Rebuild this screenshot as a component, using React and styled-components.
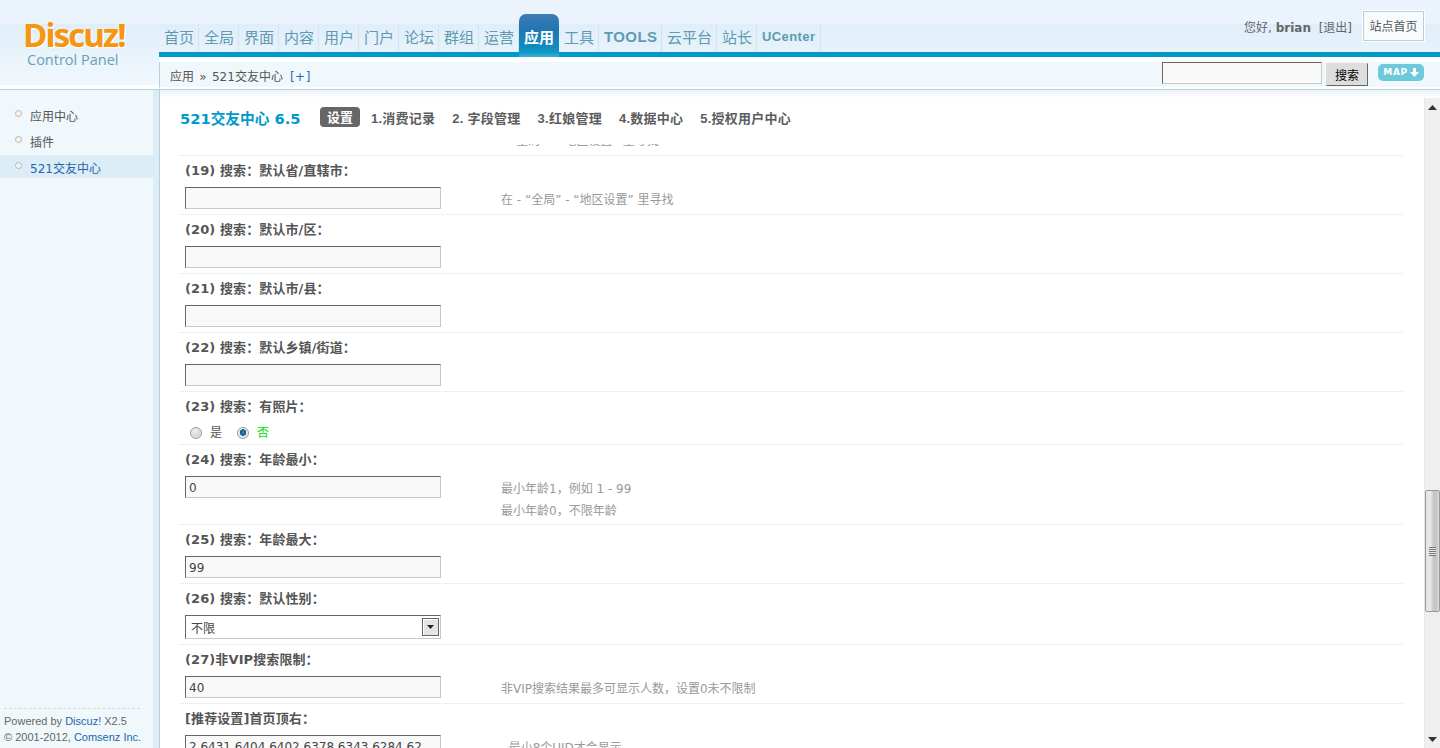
import React from "react";
import styled, { createGlobalStyle } from "styled-components";

const Global = createGlobalStyle`
  html, body { margin: 0; padding: 0; height: 100%; overflow: hidden; background: #fff; }
  body { font: 12px/18px "DejaVu Sans", "Noto Sans CJK SC", sans-serif; color: #555; }
  * { box-sizing: border-box; }
`;

const Page = styled.div`
  height: 748px;
  display: flex;
  flex-direction: column;
  overflow: hidden;
`;
const Header = styled.header`
  height: 90px;
  flex: none;
  display: flex;
  border-bottom: 1px solid #b9d0dc;
  background: linear-gradient(#ebf4fc 0, #ebf4fc 24px, #e0eef9 24px, #f1f8fd 85px, #fff 85px);
`;
const Logo = styled.div`
  width: 159px;
  flex: none;
  padding: 20px 0 0 23px;
`;
const LogoMark = styled.div`
  font: 700 33px/30px "Open Sans", sans-serif;
  letter-spacing: -1.9px;
  color: #f8950f;
  text-shadow: 1px 1px 0 #fff;
`;
const LogoSub = styled.div`
  margin: 1px 0 0 4px;
  font: 400 14.5px/18px "Open Sans", sans-serif;
  color: #6a9fb6;
`;
const HeaderMain = styled.div`
  flex: 1;
  display: flex;
  flex-direction: column;
`;
const TopBar = styled.div`
  height: 57px;
  flex: none;
  display: flex;
  justify-content: space-between;
  border-bottom: 5px solid #0099cc;
  padding-right: 16px;
`;
const Nav = styled.nav`
  display: flex;
  align-items: flex-end;
`;
const NavItem = styled.a`
  height: 28px;
  width: ${(p) => p.$w || 40}px;
  padding: 4px 0 6px 5px;
  border-right: 1px solid #d2e4ef;
  font: ${(p) => (p.$latin ? `700 ${p.$size || 15}px/18px "Liberation Sans"` : '400 15px/18px "Noto Sans CJK SC"')}, sans-serif;
  letter-spacing: ${(p) => (p.$latin ? "0.4px" : "0")};
  color: #5f9ab3;
  white-space: nowrap;
`;
const ActiveTab = styled.a`
  width: 40px;
  height: 43px;
  margin-bottom: -5px;
  padding: 14px 0 0 5px;
  border-radius: 7px 7px 0 0;
  background: linear-gradient(#3f7db4 0, #2176b0 15px, #0f8cc0 33px, #0f97c8 38px, #3db0d0 43px);
  font: 700 15px/18px "Noto Sans CJK SC", sans-serif;
  color: #fff;
`;
const Account = styled.div`
  display: flex;
  align-items: flex-start;
  padding-top: 11px;
  gap: 11px;
`;
const Greeting = styled.div`
  padding-top: 8px;
  font-size: 12px;
  line-height: 18px;
  color: #666;
`;
const SiteHome = styled.a`
  width: 61px;
  height: 30px;
  padding-top: 1px;
  background: #f8fbfd;
  border: 1px solid #b9d0dc;
  box-shadow: 0 0 0 1px #fff;
  font-size: 12px;
  line-height: 28px;
  text-align: center;
  color: #555;
`;
const Gap = styled.div`
  height: 5px;
  background: #fff;
  flex: none;
`;
const SubBar = styled.div`
  height: 27px;
  flex: none;
  display: flex;
  align-items: flex-start;
  justify-content: space-between;
  background: #f0f8fc;
  border-bottom: 2px solid #fff;
  border-left: 1px solid #b9d0dc;
  padding: 0 16px 0 10px;
`;
const Crumbs = styled.div`
  padding-top: 6px;
  word-spacing: 1.5px;
  color: #555;
`;
const Plus = styled.span`
  margin-left: 7px;
  letter-spacing: 0.5px;
  color: #2a6ab0;
`;
const SearchArea = styled.div`
  display: flex;
  align-items: flex-start;
`;
const SearchInput = styled.div`
  width: 160px;
  height: 22px;
  background: #f9f9f9;
  border: 1px solid #c8c8c8;
  border-top-color: #666;
  border-left-color: #666;
`;
const SearchButton = styled.button`
  width: 42px;
  height: 23px;
  margin: 1px 0 0 4px;
  padding: 0;
  background: #ddd;
  border: 1px solid #ddd;
  border-right-color: #666;
  border-bottom-color: #666;
  font: 12px/20px "Noto Sans CJK SC", sans-serif;
  color: #000;
`;
const MapButton = styled.a`
  width: 46px;
  height: 17px;
  margin: 2px 0 0 10px;
  display: flex;
  align-items: center;
  justify-content: center;
  gap: 2px;
  background: #6ccadb;
  border-radius: 5px;
  font: 700 9px/17px "DejaVu Sans", sans-serif;
  letter-spacing: 0.6px;
  color: #fff;
`;
const Body = styled.div`
  flex: 1;
  min-height: 0;
  display: flex;
`;
const Sidebar = styled.aside`
  width: 160px;
  flex: none;
  display: flex;
  flex-direction: column;
  padding-top: 13px;
  background: #f0f8fc;
  border-right: 1px solid #b9d0dc;
  box-shadow: inset -6px 0 0 #ddedf8;
`;
const SideList = styled.ul`
  flex: 1;
  width: 153px;
  margin: 0;
  padding: 0;
  list-style: none;
`;
const SideItem = styled.li`
  height: ${(p) => (p.$active ? 23 : 26)}px;
  display: flex;
  align-items: center;
  gap: 8px;
  padding: ${(p) => (p.$active ? "5px 0 0 15px" : "2px 0 0 15px")};
  background: ${(p) => (p.$active ? "#ddedf8" : "transparent")};
  color: ${(p) => (p.$active ? "#2366a8" : "#555")};
  line-height: 18px;
`;
const Bullet = styled.i`
  width: 7px;
  height: 7px;
  margin-top: -7px;
  border-radius: 50%;
  border: 1px solid #b5b5b5;
  background: #f4f4f4;
`;
const SideFoot = styled.div`
  margin: 0 19px 3px 4px;
  padding-top: 4px;
  border-top: 1px dashed #d8d8d8;
  font: 11px/16px "Liberation Sans", sans-serif;
  color: #666;
  white-space: nowrap;
`;
const FootLink = styled.a`
  color: #2366a8;
`;
const Main = styled.main`
  flex: 1;
  min-width: 0;
  display: flex;
  padding-top: 8px;
  background: linear-gradient(#eaf3f9 0, #fff 8px);
`;
const Content = styled.div`
  flex: 1;
  min-width: 0;
  padding: 0 20px;
  overflow: hidden;
`;
const TitleBar = styled.div`
  height: 46px;
  display: flex;
  align-items: flex-start;
  padding-top: 9px;
`;
const Title = styled.h1`
  width: 140px;
  margin: 2px 0 0;
  font: 700 14.7px/20px "DejaVu Sans", "Noto Sans CJK SC", sans-serif;
  color: #0099cc;
`;
const Tabs = styled.div`
  display: flex;
  align-items: flex-start;
  gap: 17px;
`;
const Tab = styled.a`
  padding-top: 2px;
  font: 700 13px/20px "Liberation Sans", "Noto Sans CJK SC", sans-serif;
  letter-spacing: 0.25px;
  color: #5c5c5c;
  white-space: nowrap;
`;
const ActivePill = styled.a`
  width: 40px;
  height: 20px;
  margin-right: -6px;
  padding-top: 1px;
  border-radius: 4px;
  background: #666;
  font-size: 13px;
  font-weight: 700;
  line-height: 20px;
  text-align: center;
  color: #fff;
`;
const Row = styled.section`
  padding: 6px 0 ${(p) => (p.$tight ? 0 : 5)}px 5px;
  border-bottom: 1px dotted #d6e7f4;
`;
const ClippedRow = styled.div`
  height: 12px;
  padding: 0 0 7px 330px;
  display: flex;
  align-items: flex-end;
  overflow: hidden;
  border-bottom: 1px dotted #d6e7f4;
  line-height: 14px;
  color: #999;
`;
const Label = styled.div`
  font-size: 13px;
  font-weight: 700;
  line-height: 18px;
  letter-spacing: 0.1px;
  color: #555;
`;
const Field = styled.div`
  margin-top: 7px;
  display: flex;
  align-items: flex-start;
  gap: 60px;
`;
const TextBox = styled.div`
  width: 256px;
  height: 22px;
  flex: none;
  padding: 1px 0 0 3px;
  background: #f9f9f9;
  border: 1px solid #c8c8c8;
  border-top-color: #666;
  border-left-color: #666;
  line-height: 20px;
  color: #444;
  white-space: nowrap;
  overflow: hidden;
`;
const SelectBox = styled.div`
  width: 256px;
  height: 24px;
  flex: none;
  display: flex;
  align-items: center;
  justify-content: space-between;
  padding: 0 1px 0 5px;
  background: #fff;
  border: 1px solid #c8c8c8;
  border-top-color: #666;
  border-left-color: #666;
  color: #444;
`;
const SelectLabel = styled.span`
  padding-top: 3px;
`;
const SelectArrow = styled.span`
  width: 17px;
  height: 18px;
  display: flex;
  align-items: center;
  justify-content: center;
  background: #e4e4e4;
  border: 1px solid #666;
  box-shadow: inset 1px 1px 0 #fff;
`;
const Hint = styled.div`
  margin: 2px 0 -3px;
  line-height: 22px;
  color: #999;
  white-space: nowrap;
`;
const Radios = styled.div`
  height: 22px;
  margin-top: 6px;
  display: flex;
  align-items: center;
  padding-left: 5px;
`;
const Radio = styled.i`
  width: 12px;
  height: 12px;
  border-radius: 50%;
  border: 1px solid #999;
  box-shadow: inset 0 0 0 1px #eee;
  background: ${(p) => (p.$on ? "radial-gradient(circle at 50% 45%, #2c8cc4 0, #06588c 3px, #e5e5e5 3.5px)" : "radial-gradient(circle at 40% 35%, #f2f2f2, #bdbdbd)")};
`;
const RadioText = styled.span`
  margin: 0 15px 0 8px;
  color: ${(p) => (p.$on ? "#00dd00" : "#555")};
`;
const Scrollbar = styled.div`
  width: 16px;
  flex: none;
  display: flex;
  flex-direction: column;
  align-items: center;
  background: #efefef;
  border-left: 1px solid #e6e6e6;
`;
const ArrowCell = styled.div`
  width: 100%;
  height: ${(p) => p.$h}px;
  flex: none;
  display: flex;
  align-items: center;
  justify-content: center;
`;
const Track = styled.div`
  flex: 1;
  width: 100%;
  padding-top: 374px;
`;
const Thumb = styled.div`
  width: 15px;
  height: 122px;
  display: flex;
  align-items: center;
  justify-content: center;
  border: 1px solid #999;
  border-radius: 2px;
  background: linear-gradient(90deg, #e4e4e4 0, #e8e8e8 35%, #c4c4c4 60%, #c8c8c8 85%, #e4e4e4 100%);
`;
const Grip = styled.span`
  width: 7px;
  height: 9px;
  background: repeating-linear-gradient(#777 0 1px, #e8e8e8 1px 2px);
`;

const rows = [
  { label: "(19) 搜索：默认省/直辖市：", hints: ["在 - “全局” - “地区设置” 里寻找"] },
  { label: "(20) 搜索：默认市/区：" },
  { label: "(21) 搜索：默认市/县：" },
  { label: "(22) 搜索：默认乡镇/街道：" },
];
const rows2 = [
  { label: "(24) 搜索：年龄最小：", value: "0", hints: ["最小年龄1，例如 1 - 99", "最小年龄0，不限年龄"] },
  { label: "(25) 搜索：年龄最大：", value: "99" },
];

function TextRow({ label, value, hints }) {
  return (
    <Row>
      <Label>{label}</Label>
      <Field>
        <TextBox>{value}</TextBox>
        {hints && <Hint>{hints.map((h) => <div key={h}>{h}</div>)}</Hint>}
      </Field>
    </Row>
  );
}

export default function App() {
  const nav = ["首页", "全局", "界面", "内容", "用户", "门户", "论坛", "群组", "运营"];
  return (
    <Page>
      <Global />
      <Header>
        <Logo>
          <LogoMark>Discuz!</LogoMark>
          <LogoSub>Control Panel</LogoSub>
        </Logo>
        <HeaderMain>
          <TopBar>
            <Nav>
              {nav.map((n) => <NavItem key={n}>{n}</NavItem>)}
              <ActiveTab>应用</ActiveTab>
              <NavItem>工具</NavItem>
              <NavItem $latin $w={63}>TOOLS</NavItem>
              <NavItem $w={55}>云平台</NavItem>
              <NavItem>站长</NavItem>
              <NavItem $latin $size={13} $w={64}>UCenter</NavItem>
            </Nav>
            <Account>
              <Greeting>您好, <b>brian</b> &nbsp;[退出]</Greeting>
              <SiteHome>站点首页</SiteHome>
            </Account>
          </TopBar>
          <Gap />
          <SubBar>
            <Crumbs>应用 » 521交友中心<Plus>[+]</Plus></Crumbs>
            <SearchArea>
              <SearchInput />
              <SearchButton>搜索</SearchButton>
              <MapButton>
                MAP
                <svg width="9" height="9" viewBox="0 0 9 9"><path d="M3 0h3v4h3L4.5 9 0 4h3z" fill="#fff" /></svg>
              </MapButton>
            </SearchArea>
          </SubBar>
        </HeaderMain>
      </Header>
      <Body>
        <Sidebar>
          <SideList>
            <SideItem><Bullet />应用中心</SideItem>
            <SideItem><Bullet />插件</SideItem>
            <SideItem $active><Bullet />521交友中心</SideItem>
          </SideList>
          <SideFoot>
            <div>Powered by <FootLink>Discuz!</FootLink> X2.5</div>
            <div>© 2001-2012, <FootLink>Comsenz Inc.</FootLink></div>
          </SideFoot>
        </Sidebar>
        <Main>
          <Content>
            <TitleBar>
              <Title>521交友中心 6.5</Title>
              <Tabs>
                <ActivePill>设置</ActivePill>
                <Tab>1.消费记录</Tab>
                <Tab>2. 字段管理</Tab>
                <Tab>3.红娘管理</Tab>
                <Tab>4.数据中心</Tab>
                <Tab>5.授权用户中心</Tab>
              </Tabs>
            </TitleBar>
            <ClippedRow>“全局” - “地区设置” 里寻找</ClippedRow>
            {rows.map((r) => <TextRow key={r.label} {...r} />)}
            <Row $tight>
              <Label>(23) 搜索：有照片：</Label>
              <Radios>
                <Radio /><RadioText>是</RadioText>
                <Radio $on /><RadioText $on>否</RadioText>
              </Radios>
            </Row>
            {rows2.map((r) => <TextRow key={r.label} {...r} />)}
            <Row>
              <Label>(26) 搜索：默认性别：</Label>
              <Field>
                <SelectBox>
                  <SelectLabel>不限</SelectLabel>
                  <SelectArrow>
                    <svg width="7" height="4" viewBox="0 0 7 4"><path d="M0 0h7L3.5 4z" fill="#222" /></svg>
                  </SelectArrow>
                </SelectBox>
              </Field>
            </Row>
            <TextRow label="(27)非VIP搜索限制：" value="40" hints={["非VIP搜索结果最多可显示人数，设置0未不限制"]} />
            <TextRow label="[推荐设置]首页顶右：" value="2 6431 6404 6402 6378 6343 6284 62" hints={[", 最小8个UID才会显示"]} />
          </Content>
          <Scrollbar>
            <ArrowCell $h={18}>
              <svg width="9" height="5" viewBox="0 0 9 5"><path d="M4.5 0L9 5H0z" fill="#333" /></svg>
            </ArrowCell>
            <Track>
              <Thumb><Grip /></Thumb>
            </Track>
            <ArrowCell $h={17}>
              <svg width="9" height="5" viewBox="0 0 9 5"><path d="M0 0h9L4.5 5z" fill="#333" /></svg>
            </ArrowCell>
          </Scrollbar>
        </Main>
      </Body>
    </Page>
  );
}
